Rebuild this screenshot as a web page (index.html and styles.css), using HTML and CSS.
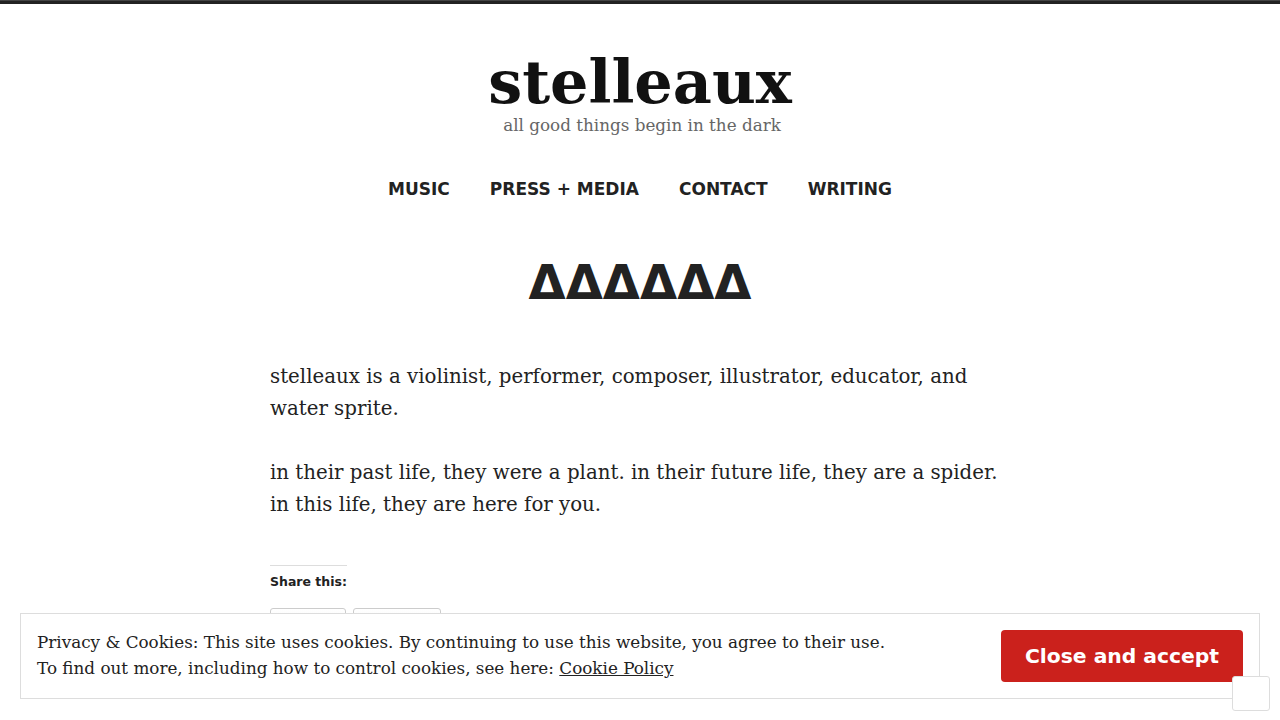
FILE: index.html
```html
<!DOCTYPE html>
<html lang="en">
<head>
<meta charset="utf-8">
<title>stelleaux</title>
<link rel="stylesheet" href="styles.css">
</head>
<body>
<div class="topbar"></div>
<header class="site-header">
  <h1 class="site-title">stelleaux</h1>
  <p class="tagline">all good things begin in the dark</p>
  <nav class="main-nav">
    <a href="#">MUSIC</a>
    <a href="#">PRESS + MEDIA</a>
    <a href="#">CONTACT</a>
    <a href="#">WRITING</a>
  </nav>
</header>
<main class="content">
  <div class="deltas">ΔΔΔΔΔΔ</div>
  <p class="para">stelleaux is a violinist, performer, composer, illustrator, educator, and water sprite.</p>
  <p class="para">in their past life, they were a plant. in their future life, they are a spider.<br>in this life, they are here for you.</p>
  <div class="share">
    <h3 class="share-title">Share this:</h3>
    <div class="share-buttons">
      <span class="share-btn wide1"></span>
      <span class="share-btn wide2"></span>
    </div>
  </div>
</main>
<div class="cookie-banner">
  <div class="cookie-text">
    <div>Privacy &amp; Cookies: This site uses cookies. By continuing to use this website, you agree to their use.</div>
    <div>To find out more, including how to control cookies, see here: <a href="#" class="cookie-link">Cookie Policy</a></div>
  </div>
  <button class="cookie-btn">Close and accept</button>
</div>
<div class="follow-box"></div>
</body>
</html>
```
FILE: styles.css
```css
html, body {
  margin: 0;
  padding: 0;
  background: #fff;
}
body {
  color: #222;
  font-family: "DejaVu Serif", serif;
  height: 720px;
  overflow: hidden;
}
.topbar {
  height: 4px;
  background: #222;
  border-top: 1px solid #444;
  box-sizing: border-box;
}
.site-header {
  display: flex;
  flex-direction: column;
  align-items: center;
  padding-top: 50px;
}
.site-title {
  margin: 0;
  font-family: "DejaVu Serif", serif;
  font-weight: bold;
  font-size: 60.4px;
  line-height: 55px;
  color: #111;
}
.tagline {
  margin: 7px 0 0 4px;
  font-size: 16.8px;
  line-height: 19px;
  color: #666;
}
.main-nav {
  display: flex;
  gap: 40px;
  margin-top: 43px;
}
.main-nav a {
  font-family: "DejaVu Sans", sans-serif;
  font-weight: bold;
  font-size: 17px;
  line-height: 22px;
  color: #222;
  text-decoration: none;
}
.content {
  width: 740px;
  margin: 0 auto;
}
.deltas {
  margin-top: 62px;
  text-align: center;
  font-family: "DejaVu Sans", sans-serif;
  font-weight: bold;
  font-size: 48px;
  line-height: 40px;
  color: #222;
}
.para {
  margin: 0;
  font-size: 19.8px;
  line-height: 32px;
}
.deltas + .para {
  margin-top: 59px;
}
.para + .para {
  margin-top: 32px;
}
.share {
  margin-top: 44px;
}
.share-title {
  margin: 0;
  display: inline-block;
  white-space: nowrap;
  border-top: 1px solid #ddd;
  padding-top: 6px;
  font-family: "DejaVu Sans", sans-serif;
  font-weight: bold;
  font-size: 12.5px;
  line-height: 20px;
  color: #222;
}
.share-buttons {
  display: flex;
  gap: 7px;
  margin-top: 16px;
}
.share-btn {
  display: block;
  height: 28px;
  border: 1px solid #ccc;
  border-radius: 3px;
  background: linear-gradient(#fff, #f5f5f5);
}
.wide1 { width: 74px; }
.wide2 { width: 86px; }
.cookie-banner {
  position: fixed;
  left: 20px;
  right: 20px;
  bottom: 21px;
  height: 86px;
  box-sizing: border-box;
  background: #fff;
  border: 1px solid #ddd;
  display: flex;
  align-items: center;
  justify-content: space-between;
  padding: 0 16px 1px;
}
.cookie-text {
  font-size: 16.8px;
  line-height: 26px;
  color: #222;
  margin-bottom: 1px;
}
.cookie-link {
  color: #222;
  text-decoration: underline;
}
.cookie-btn {
  width: 242px;
  height: 52px;
  border: 0;
  border-radius: 4px;
  background: #cb211c;
  color: #fff;
  font-family: "DejaVu Sans", sans-serif;
  font-weight: bold;
  font-size: 20.3px;
  cursor: pointer;
}
.follow-box {
  position: fixed;
  right: 10px;
  bottom: 9px;
  width: 38px;
  height: 35px;
  box-sizing: border-box;
  background: #fff;
  border: 1px solid #ddd;
  border-radius: 3px;
}
```
